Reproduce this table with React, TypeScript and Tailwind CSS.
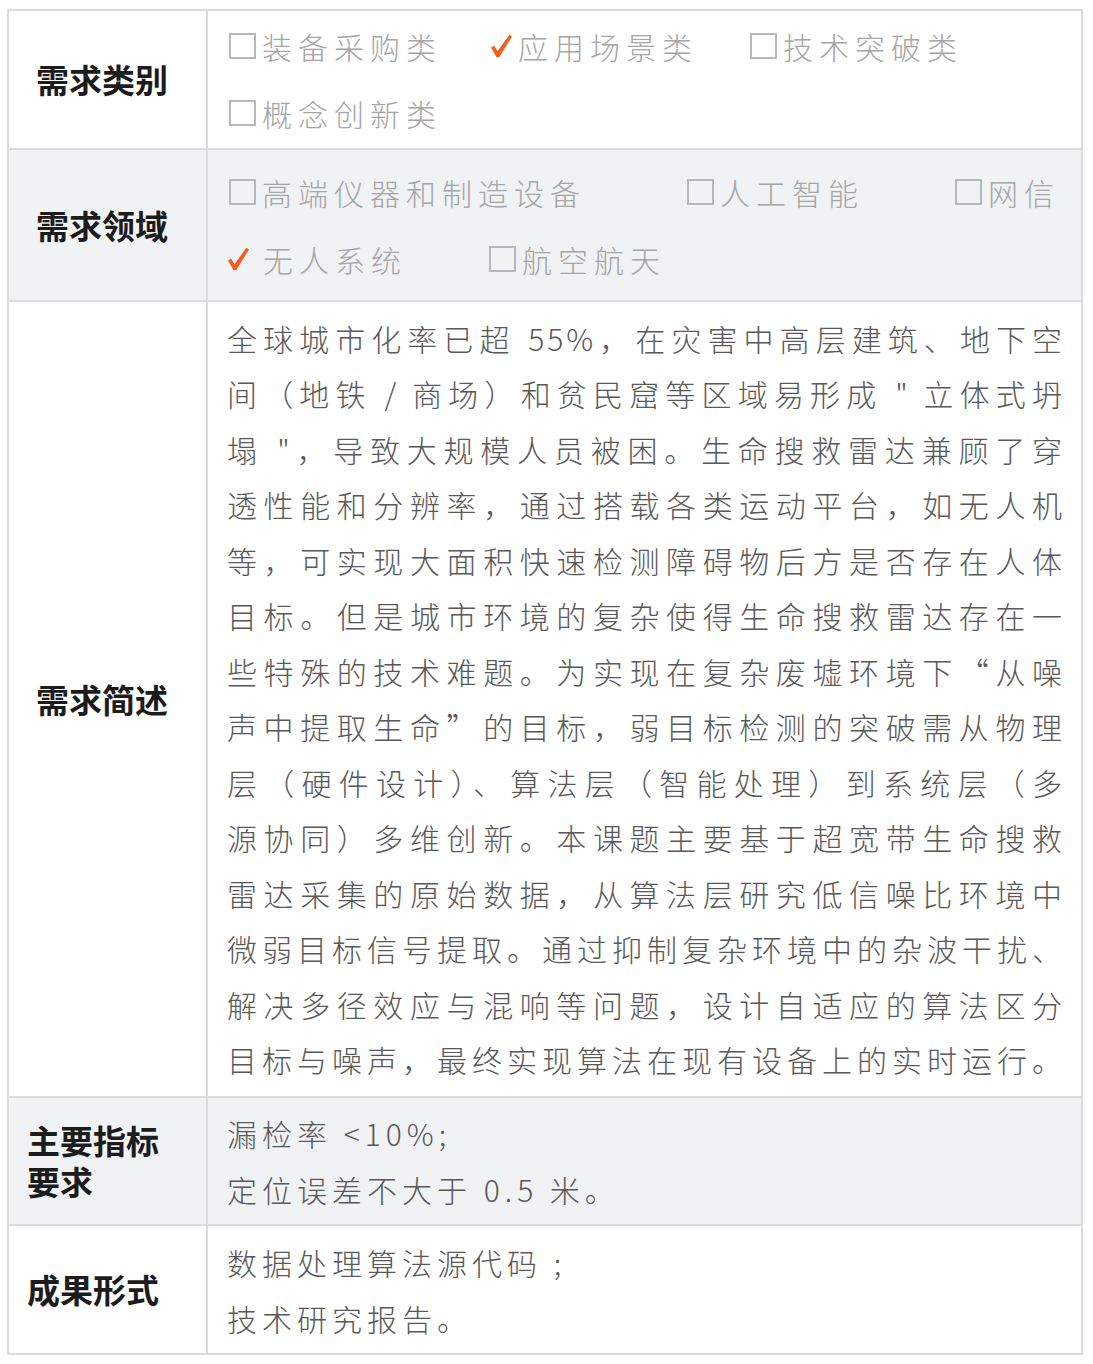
// 需求表：五行两列，左列为加粗标签，右列为选项或正文
const FONT = "font-['Noto_Sans_CJK_SC','Noto_Sans',sans-serif]";

// 勾选标记（橙色手写风格对勾）
function CheckMark() {
  return (
    <svg viewBox="0 0 22 24" className="h-[24px] w-[22px] shrink-0">
      <path d="M1 13.5 L4.2 11.8 L7.6 17.2 L19.4 0.8 L22 2.4 L9.2 23.2 L6.6 23.2 Z" fill="#f25c1f" />
    </svg>
  );
}

// 空白复选框
function Box() {
  return <span className="inline-block h-[26px] w-[27px] shrink-0 border-2 border-[#b4b8bf]" />;
}

type Option = { text: string; checked?: boolean; width: string; spaced?: boolean };

function OptionItem({ opt }: { opt: Option }) {
  return (
    <div className={`flex items-center ${opt.width}`}>
      {opt.checked ? <CheckMark /> : <Box />}
      <span className={`${opt.spaced ? "ml-[14px]" : "ml-[6px]"} whitespace-nowrap tracking-[6px]`}>{opt.text}</span>
    </div>
  );
}

const categoryLines: Option[][] = [
  [
    { text: "装备采购类", width: "w-[261px]" },
    { text: "应用场景类", checked: true, width: "w-[260px]" },
    { text: "技术突破类", width: "w-[260px]" },
  ],
  [{ text: "概念创新类", width: "w-[261px]" }],
];

const fieldLines: Option[][] = [
  [
    { text: "高端仪器和制造设备", width: "w-[458px]" },
    { text: "人工智能", width: "w-[268px]" },
    { text: "网信", width: "w-[120px]" },
  ],
  [
    { text: "无人系统", checked: true, spaced: true, width: "w-[262px]" },
    { text: "航空航天", width: "w-[200px]" },
  ],
];

// 需求简述，按原图逐行排版，两端对齐
const descLines = [
  "全球城市化率已超 55%，在灾害中高层建筑、地下空",
  "间（地铁 / 商场）和贫民窟等区域易形成 \" 立体式坍",
  "塌 \"，导致大规模人员被困。生命搜救雷达兼顾了穿",
  "透性能和分辨率，通过搭载各类运动平台，如无人机",
  "等，可实现大面积快速检测障碍物后方是否存在人体",
  "目标。但是城市环境的复杂使得生命搜救雷达存在一",
  "些特殊的技术难题。为实现在复杂废墟环境下“从噪",
  "声中提取生命”的目标，弱目标检测的突破需从物理",
  "层（硬件设计）、算法层（智能处理）到系统层（多",
  "源协同）多维创新。本课题主要基于超宽带生命搜救",
  "雷达采集的原始数据，从算法层研究低信噪比环境中",
  "微弱目标信号提取。通过抑制复杂环境中的杂波干扰、",
  "解决多径效应与混响等问题，设计自适应的算法区分",
  "目标与噪声，最终实现算法在现有设备上的实时运行。",
];

function Label({ children, pad }: { children: React.ReactNode; pad: string }) {
  return (
    <div
      className={`flex w-[199px] shrink-0 items-center border-r-2 border-[#dcdcdc] ${pad} text-[33px] leading-[41px] font-bold text-[#1c1c1c]`}
    >
      {children}
    </div>
  );
}

export default function App() {
  return (
    <div className={`min-h-[1364px] bg-white pl-[7px] pt-[9px] ${FONT}`}>
      <div className="w-[1076px] border-2 border-[#dcdcdc]">
        {/* 需求类别 */}
        <div className="flex h-[137px]">
          <Label pad="pl-[27px]">需求类别</Label>
          <div className="flex flex-1 flex-col justify-center gap-[11px] pl-[21px] text-[30px] leading-[56px] font-light text-[#a6a6a6]">
            {categoryLines.map((line, i) => (
              <div key={i} className="flex">
                {line.map((opt) => (
                  <OptionItem key={opt.text} opt={opt} />
                ))}
              </div>
            ))}
          </div>
        </div>

        {/* 需求领域 */}
        <div className="flex h-[152px] border-t-2 border-[#dcdcdc] bg-[#f1f2f4]">
          <Label pad="pl-[27px]">需求领域</Label>
          <div className="flex flex-1 flex-col justify-center gap-[11px] pl-[21px] text-[30px] leading-[56px] font-light text-[#a6a6a6]">
            {fieldLines.map((line, i) => (
              <div key={i} className={`flex ${i === 1 ? "-ml-[2px]" : ""}`}>
                {line.map((opt) => (
                  <OptionItem key={opt.text} opt={opt} />
                ))}
              </div>
            ))}
          </div>
        </div>

        {/* 需求简述 */}
        <div className="flex h-[796px] border-t-2 border-[#dcdcdc]">
          <Label pad="pl-[27px]">需求简述</Label>
          <div className="flex min-w-0 flex-1 flex-col justify-center pl-[19px] pr-[16px] text-[30px] leading-[55.5px] font-light text-[#595959]">
            {descLines.map((line, i) => (
              <div key={i} className="whitespace-nowrap text-justify tracking-[3px] [text-align-last:justify]">
                {line}
              </div>
            ))}
          </div>
        </div>

        {/* 主要指标要求 */}
        <div className="flex h-[128px] border-t-2 border-[#dcdcdc] bg-[#f1f2f4]">
          <Label pad="pl-[18px]">
            <div>
              主要指标
              <br />
              要求
            </div>
          </Label>
          <div className="flex flex-1 flex-col justify-center pl-[19px] text-[30px] leading-[56px] font-light tracking-[5px] text-[#595959]">
            <div>漏检率 &lt;10%;</div>
            <div>定位误差不大于 0.5 米。</div>
          </div>
        </div>

        {/* 成果形式 */}
        <div className="flex h-[129px] border-t-2 border-[#dcdcdc]">
          <Label pad="pl-[18px]">成果形式</Label>
          <div className="flex flex-1 flex-col justify-center pl-[19px] text-[30px] leading-[56px] font-light tracking-[5px] text-[#595959]">
            <div>数据处理算法源代码 ;</div>
            <div>技术研究报告。</div>
          </div>
        </div>
      </div>
    </div>
  );
}
